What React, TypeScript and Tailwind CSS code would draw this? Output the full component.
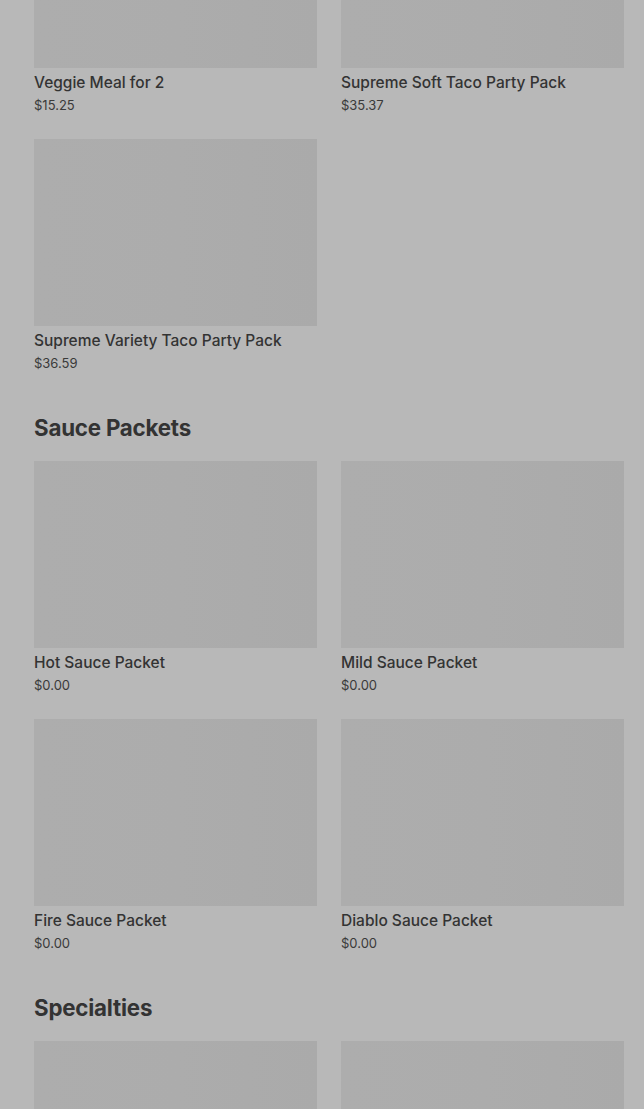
import React from "react";

type Item = { name?: string; price?: string };

const Card = ({ item }: { item: Item }) => (
  <div className="flex flex-col">
    <div className="h-[187px] w-full bg-gradient-to-r from-[#adadad] via-[#acacac] to-[#aaaaaa]" />
    {item.name && (
      <>
        <div className="mt-[3px] text-[15.5px] leading-[24px] font-medium text-[#333333]">{item.name}</div>
        <div className="text-[13px] leading-[21px] text-[#3a3a3a]">{item.price}</div>
      </>
    )}
  </div>
);

const Grid = ({ items }: { items: Item[] }) => (
  <div className="grid grid-cols-2 gap-x-[24px] gap-y-[23px]">
    {items.map((it, i) => (
      <Card key={i} item={it} />
    ))}
  </div>
);

const Heading = ({ children }: { children: React.ReactNode }) => (
  <h2 className="mt-[38px] mb-[17px] text-[22.3px] leading-[32px] font-bold text-[#333333] tracking-[-0.2px]">{children}</h2>
);

export default function App() {
  return (
    <div
      className="h-[1109px] overflow-hidden bg-[#b8b8b8]"
      style={{ fontFamily: "Inter, 'Noto Sans', Roboto, sans-serif" }}
    >
      <div className="mt-[-119px] pl-[34px] pr-[20px]">
        <Grid
          items={[
            { name: "Veggie Meal for 2", price: "$15.25" },
            { name: "Supreme Soft Taco Party Pack", price: "$35.37" },
            { name: "Supreme Variety Taco Party Pack", price: "$36.59" },
          ]}
        />
        <Heading>Sauce Packets</Heading>
        <Grid
          items={[
            { name: "Hot Sauce Packet", price: "$0.00" },
            { name: "Mild Sauce Packet", price: "$0.00" },
            { name: "Fire Sauce Packet", price: "$0.00" },
            { name: "Diablo Sauce Packet", price: "$0.00" },
          ]}
        />
        <Heading>Specialties</Heading>
        <Grid items={[{}, {}]} />
      </div>
    </div>
  );
}
